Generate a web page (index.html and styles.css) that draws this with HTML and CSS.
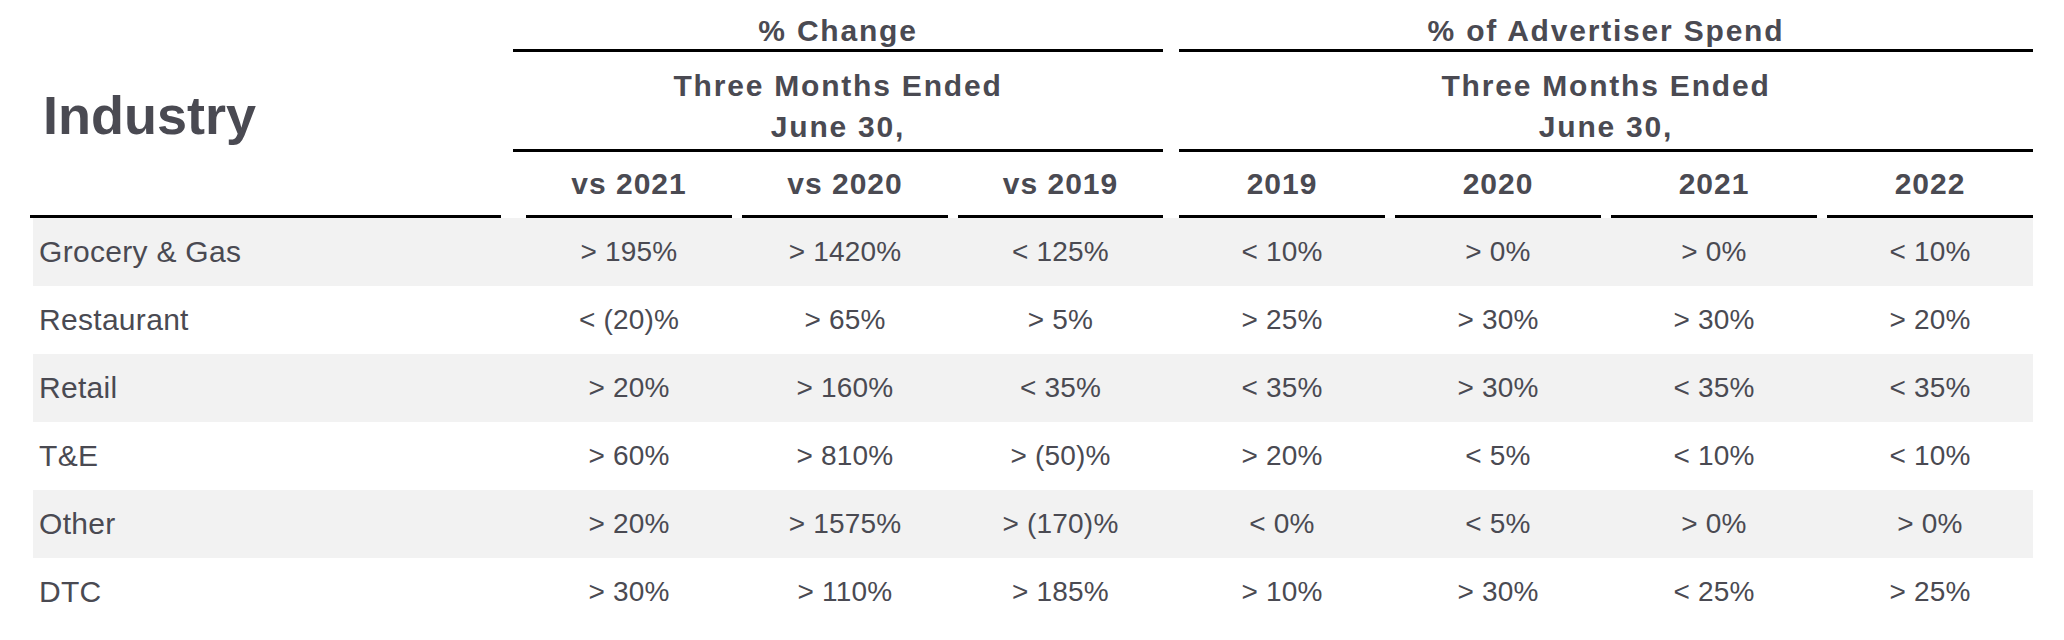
FILE: index.html
```html
<!DOCTYPE html>
<html lang="en">
<head>
<meta charset="utf-8">
<title>Industry</title>
<link rel="stylesheet" href="styles.css">
</head>
<body>
<div class="table">
  <div class="head">
    <div class="industry"><span>Industry</span></div>
    <div class="group g1 title">% Change</div>
    <div class="group g2 title">% of Advertiser Spend</div>
    <div class="group g1 period">Three Months Ended<br>June 30,</div>
    <div class="group g2 period">Three Months Ended<br>June 30,</div>
    <div class="col gap">vs 2021</div>
    <div class="col gap">vs 2020</div>
    <div class="col gap-lg">vs 2019</div>
    <div class="col gap">2019</div>
    <div class="col gap">2020</div>
    <div class="col gap">2021</div>
    <div class="col">2022</div>
  </div>

  <div class="row shade">
    <div class="label">Grocery &amp; Gas</div>
    <div class="v gap">&gt; 195%</div><div class="v gap">&gt; 1420%</div><div class="v gap-lg">&lt; 125%</div>
    <div class="v gap">&lt; 10%</div><div class="v gap">&gt; 0%</div><div class="v gap">&gt; 0%</div><div class="v">&lt; 10%</div>
  </div>
  <div class="row">
    <div class="label">Restaurant</div>
    <div class="v gap">&lt; (20)%</div><div class="v gap">&gt; 65%</div><div class="v gap-lg">&gt; 5%</div>
    <div class="v gap">&gt; 25%</div><div class="v gap">&gt; 30%</div><div class="v gap">&gt; 30%</div><div class="v">&gt; 20%</div>
  </div>
  <div class="row shade">
    <div class="label">Retail</div>
    <div class="v gap">&gt; 20%</div><div class="v gap">&gt; 160%</div><div class="v gap-lg">&lt; 35%</div>
    <div class="v gap">&lt; 35%</div><div class="v gap">&gt; 30%</div><div class="v gap">&lt; 35%</div><div class="v">&lt; 35%</div>
  </div>
  <div class="row">
    <div class="label">T&amp;E</div>
    <div class="v gap">&gt; 60%</div><div class="v gap">&gt; 810%</div><div class="v gap-lg">&gt; (50)%</div>
    <div class="v gap">&gt; 20%</div><div class="v gap">&lt; 5%</div><div class="v gap">&lt; 10%</div><div class="v">&lt; 10%</div>
  </div>
  <div class="row shade">
    <div class="label">Other</div>
    <div class="v gap">&gt; 20%</div><div class="v gap">&gt; 1575%</div><div class="v gap-lg">&gt; (170)%</div>
    <div class="v gap">&lt; 0%</div><div class="v gap">&lt; 5%</div><div class="v gap">&gt; 0%</div><div class="v">&gt; 0%</div>
  </div>
  <div class="row">
    <div class="label">DTC</div>
    <div class="v gap">&gt; 30%</div><div class="v gap">&gt; 110%</div><div class="v gap-lg">&gt; 185%</div>
    <div class="v gap">&gt; 10%</div><div class="v gap">&gt; 30%</div><div class="v gap">&lt; 25%</div><div class="v">&gt; 25%</div>
  </div>
</div>
</body>
</html>
```

FILE: styles.css
```css
html, body {
  margin: 0;
  padding: 0;
  background: #ffffff;
}

body {
  font-family: "Liberation Sans", Arial, sans-serif;
  color: #4a4a52;
}

.table {
  margin-left: 30px;
  width: 2003px;
}

.head {
  display: grid;
  grid-template-columns: 496px 216px 216px 221px 216px 216px 216px 206px;
  grid-template-rows: 52px 100px 66px;
  font-weight: 700;
  font-size: 30px;
  letter-spacing: 1px;
}

.industry {
  grid-column: 1;
  grid-row: 1 / 4;
  margin-right: 25px;
  border-bottom: 3px solid #000;
  padding: 85px 0 0 13px;
  font-size: 54px;
  line-height: 60px;
  letter-spacing: 0;
}

.group {
  text-align: center;
  border-bottom: 3px solid #000;
  letter-spacing: 1.8px;
}

.g1 {
  grid-column: 2 / 5;
  margin-left: -13px;
  margin-right: 16px;
}

.g2 {
  grid-column: 5 / 9;
}

.title {
  grid-row: 1;
  padding-top: 13px;
  line-height: 36px;
}

.period {
  grid-row: 2;
  padding-top: 13px;
  padding-bottom: 2px;
  line-height: 41px;
}

.col {
  grid-row: 3;
  text-align: center;
  line-height: 63px;
  border-bottom: 3px solid #000;
}

.gap {
  margin-right: 10px;
}

.gap-lg {
  margin-right: 16px;
}

.row {
  display: grid;
  grid-template-columns: 493px 216px 216px 221px 216px 216px 216px 206px;
  margin-left: 3px;
  height: 68px;
  align-items: center;
  font-size: 30px;
  letter-spacing: 0.3px;
}

.shade {
  background: #f2f2f2;
}

.label {
  padding-left: 6px;
}

.v {
  text-align: center;
  font-size: 28px;
  letter-spacing: 0.2px;
}
```
